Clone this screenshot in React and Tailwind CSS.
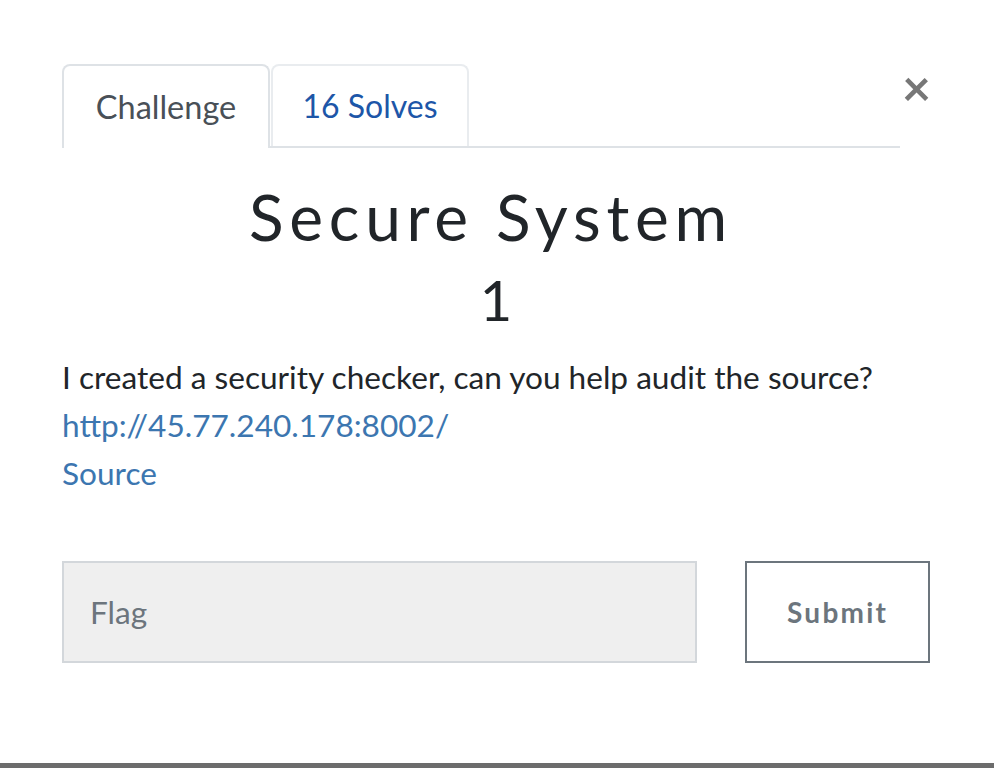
import React, { useState } from 'react';

const App = () => {
  const [tab, setTab] = useState('challenge');
  const [flag, setFlag] = useState('');

  return (
    <div className="relative w-[994px] h-[768px] bg-white overflow-hidden font-['Lato','Liberation_Sans',sans-serif]">
      <div className="flex flex-col pt-[64px] pl-[62px] pr-[64px]">
        <div className="flex items-start">
          <div className="flex items-end border-b-2 border-[#dee2e6] w-[840px]">
            <button
              onClick={() => setTab('challenge')}
              className="h-[84px] w-[208px] -mb-[2px] rounded-t-[8px] border-2 border-b-0 border-[#dee2e6] bg-white text-[32.5px] text-[#495057]"
            >
              Challenge
            </button>
            <button
              onClick={() => setTab('solves')}
              className="h-[82px] w-[198px] ml-[1px] rounded-t-[8px] border-2 border-b-0 border-[#e9ecef] text-[32px] text-[#1d56a8]"
            >
              16 Solves
            </button>
          </div>
          <button className="ml-[2px] -mt-[2px] w-[28px] text-[50px] leading-none font-bold text-[#777]">
            ×
          </button>
        </div>

        <h2 className="mt-[31px] pr-[10px] text-center text-[64px] leading-[76px] tracking-[0.09em] text-[#212529] font-normal">
          Secure System
        </h2>
        <h3 className="mt-[5px] text-center text-[56px] leading-[80px] text-[#212529]">1</h3>

        <div className="mt-[13px] text-[31.6px] leading-[48px] text-[#212529]">
          <p>I created a security checker, can you help audit the source?</p>
          <a href="#" className="block text-[#3c76b0]">http://45.77.240.178:8002/</a>
          <a href="#" className="block text-[#3c76b0]">Source</a>
        </div>

        <div className="flex mt-[64px] gap-[48px]">
          <input
            value={flag}
            onChange={(e) => setFlag(e.target.value)}
            placeholder="Flag"
            className="w-[636px] h-[102px] bg-[#efefef] border-2 border-[#d3d7db] px-[26px] text-[31.6px] text-[#495057] placeholder-[#6c757d] outline-none"
          />
          <button className="w-[185px] h-[102px] border-2 border-[#6c757d] text-[28px] font-bold tracking-[0.08em] text-[#6c757d]">
            Submit
          </button>
        </div>
      </div>
      <div className="absolute left-0 right-0 bottom-0 h-[5px] bg-[#6c6c6c]" />
    </div>
  );
};

export default App;
